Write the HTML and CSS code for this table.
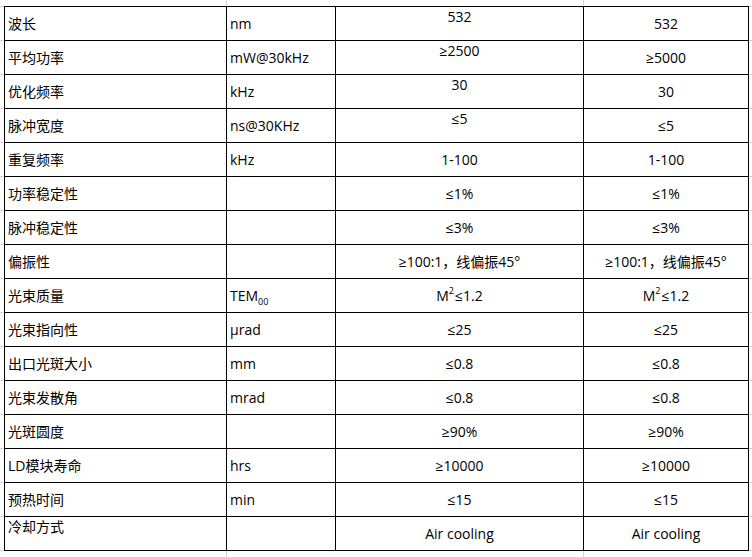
FILE: index.html
```html
<!DOCTYPE html>
<html lang="zh-CN">
<head>
<meta charset="utf-8">
<title>参数表</title>
<link rel="stylesheet" href="styles.css">
</head>
<body>
<table class="spec">
  <colgroup>
    <col class="c1"><col class="c2"><col class="c3"><col class="c4">
  </colgroup>
  <tbody>
    <tr><td>波长</td><td>nm</td><td class="v top">532</td><td class="v">532</td></tr>
    <tr><td>平均功率</td><td>mW@30kHz</td><td class="v top">≥2500</td><td class="v">≥5000</td></tr>
    <tr><td>优化频率</td><td>kHz</td><td class="v top">30</td><td class="v">30</td></tr>
    <tr><td>脉冲宽度</td><td>ns@30KHz</td><td class="v top">≤5</td><td class="v">≤5</td></tr>
    <tr><td>重复频率</td><td>kHz</td><td class="v">1-100</td><td class="v">1-100</td></tr>
    <tr><td>功率稳定性</td><td></td><td class="v">≤1%</td><td class="v">≤1%</td></tr>
    <tr><td>脉冲稳定性</td><td></td><td class="v">≤3%</td><td class="v">≤3%</td></tr>
    <tr><td>偏振性</td><td></td><td class="v">≥100:1，线偏振45°</td><td class="v">≥100:1，线偏振45°</td></tr>
    <tr><td>光束质量</td><td>TEM<sub class="sub">00</sub></td><td class="v">M<sup class="sup">2</sup>≤1.2</td><td class="v">M<sup class="sup">2</sup>≤1.2</td></tr>
    <tr><td>光束指向性</td><td>μrad</td><td class="v">≤25</td><td class="v">≤25</td></tr>
    <tr><td>出口光斑大小</td><td>mm</td><td class="v">≤0.8</td><td class="v">≤0.8</td></tr>
    <tr><td>光束发散角</td><td>mrad</td><td class="v">≤0.8</td><td class="v">≤0.8</td></tr>
    <tr><td>光斑圆度</td><td></td><td class="v">≥90%</td><td class="v">≥90%</td></tr>
    <tr><td>LD模块寿命</td><td>hrs</td><td class="v">≥10000</td><td class="v">≥10000</td></tr>
    <tr><td>预热时间</td><td>min</td><td class="v">≤15</td><td class="v">≤15</td></tr>
    <tr><td class="top">冷却方式</td><td></td><td class="v">Air cooling</td><td class="v">Air cooling</td></tr>
  </tbody>
</table>
</body>
</html>
```
FILE: styles.css
```css
html, body {
  margin: 0;
  padding: 0;
}
body {
  width: 752px;
  height: 557px;
  background-color: #fff;
  background-image:
    linear-gradient(to right, transparent 226px, #d4d4d4 226px, #d4d4d4 227px, transparent 227px),
    linear-gradient(to right, transparent 583px, #d4d4d4 583px, #d4d4d4 584px, transparent 584px),
    repeating-linear-gradient(to bottom, #d4d4d4 0, #d4d4d4 1px, transparent 1px, transparent 34px);
  background-position: 0 0, 0 0, 0 6px;
  background-repeat: no-repeat, no-repeat, repeat-y;
  font-family: "Open Sans", "Noto Sans CJK SC", sans-serif;
  font-size: 14px;
  color: #000;
  overflow: hidden;
}
.spec {
  margin: 6px 0 0 4px;
  border-collapse: collapse;
  table-layout: fixed;
  width: 744px;
  background: #fff;
}
.c1 { width: 222px; }
.c2 { width: 109px; }
.c3 { width: 248px; }
.c4 { width: 165px; }
.spec td {
  border: 1px solid #000;
  height: 34px;
  box-sizing: border-box;
  padding: 0 3px;
  line-height: 20px;
  vertical-align: middle;
  white-space: nowrap;
}
.spec td.v {
  text-align: center;
  padding: 0;
}
.spec td.top {
  vertical-align: top;
  padding-top: 0;
}
.sub {
  font-size: 9px;
  line-height: 0;
  vertical-align: -4px;
}
.sup {
  font-size: 9px;
  line-height: 0;
  vertical-align: 7px;
  margin-right: 1px;
}
```
